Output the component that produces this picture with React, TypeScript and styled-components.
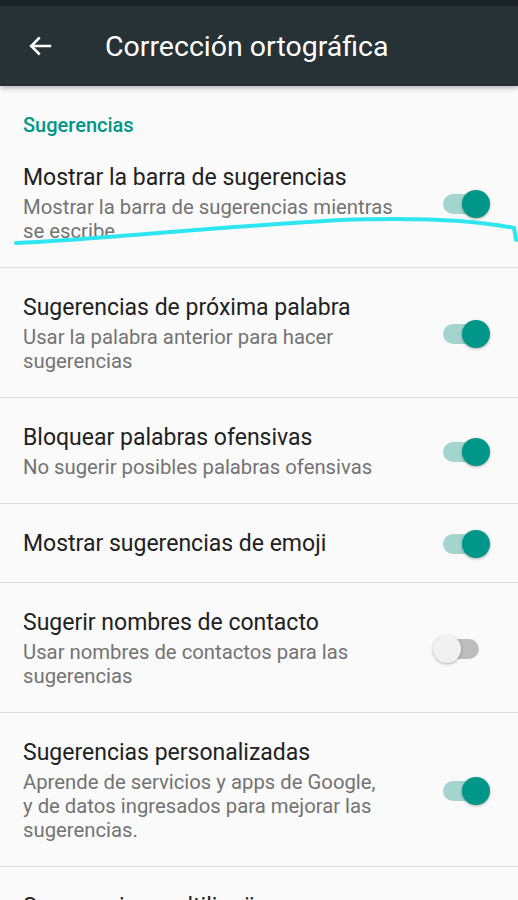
import { useState } from "react";
import styled, { createGlobalStyle } from "styled-components";

const GlobalStyle = createGlobalStyle`
	html, body {
		margin: 0;
		padding: 0;
		background: #fafafa;
		font-family: Roboto, "Noto Sans", sans-serif;
		overflow: hidden;
	}
`;

const Screen = styled.div`
	position: relative;
	width: 518px;
	height: 900px;
	overflow: hidden;
	background: #fafafa;
`;

const StatusBar = styled.div`
	height: 6px;
	background: #1d2427;
`;

const Toolbar = styled.header`
	display: flex;
	align-items: center;
	height: 80px;
	padding: 0 0 0 26px;
	background: #273236;
	color: #fff;
	box-shadow: 0 2px 5px rgba(0, 0, 0, 0.28);
	position: relative;
	z-index: 1;
	& > svg {
		flex: none;
	}
`;

const Title = styled.h1`
	margin: 0 0 0 51px;
	font-size: 28.5px;
	font-weight: 400;
`;

const SectionHeader = styled.div`
	padding: 27px 23px 1px;
	font-size: 20px;
	line-height: 24px;
	color: #009688;
	font-weight: 500;
`;

const Row = styled.div`
	display: flex;
	align-items: center;
	padding: 26px 39px 24px 23px;
	border-bottom: 1px solid #dadada;
	& > .text {
		flex: 1;
		min-width: 0;
		max-width: 372px;
	}
	& > .text + * {
		margin-left: auto;
	}
`;

const RowTitle = styled.div`
	font-size: 23px;
	line-height: 28px;
	color: #212121;
`;

const RowSummary = styled.div`
	margin-top: 3px;
	font-size: 20.3px;
	line-height: 24px;
	color: #737373;
`;

const Track = styled.button<{ $on: boolean }>`
	position: relative;
	flex: none;
	width: 36px;
	height: 20px;
	padding: 0;
	border: none;
	border-radius: 10px;
	background: ${(p) => (p.$on ? "#a3d4ce" : "#bdbdbd")};
	cursor: pointer;
	&::after {
		content: "";
		position: absolute;
		top: -4px;
		left: ${(p) => (p.$on ? "19px" : "-10px")};
		width: 28px;
		height: 28px;
		border-radius: 50%;
		background: ${(p) => (p.$on ? "#009688" : "#f1f1f1")};
		box-shadow: 0 1px 3px rgba(0, 0, 0, 0.3);
	}
`;

const Scribble = styled.svg`
	position: absolute;
	left: 0;
	top: 0;
	pointer-events: none;
`;

const prefs = [
	{ title: "Mostrar la barra de sugerencias", summary: "Mostrar la barra de sugerencias mientras se escribe", on: true },
	{ title: "Sugerencias de próxima palabra", summary: "Usar la palabra anterior para hacer sugerencias", on: true },
	{ title: "Bloquear palabras ofensivas", summary: "No sugerir posibles palabras ofensivas", on: true },
	{ title: "Mostrar sugerencias de emoji", on: true },
	{ title: "Sugerir nombres de contacto", summary: "Usar nombres de contactos para las sugerencias", on: false },
	{ title: "Sugerencias personalizadas", summary: "Aprende de servicios y apps de Google, y\u00a0de datos ingresados para mejorar las sugerencias.", on: true },
	{ title: "Sugerencias multilingües", summary: "Mostrar sugerencias en varios idiomas", on: true },
];

export default function App() {
	const [state, setState] = useState(prefs.map((p) => p.on));

	return (
		<Screen>
			<GlobalStyle />
			<StatusBar />
			<Toolbar>
				<svg width="28" height="28" viewBox="0 0 24 24" fill="none" stroke="#fff" strokeWidth="2.2" strokeLinecap="square">
					<path d="M20.5 12H4.5M11 5.5 4.5 12l6.5 6.5" />
				</svg>
				<Title>Corrección ortográfica</Title>
			</Toolbar>
			<SectionHeader>Sugerencias</SectionHeader>
			{prefs.map((p, i) => (
				<Row key={p.title}>
					<div className="text">
						<RowTitle>{p.title}</RowTitle>
						{p.summary && <RowSummary>{p.summary}</RowSummary>}
					</div>
					<Track
						$on={state[i]}
						aria-label={p.title}
						onClick={() => setState((s) => s.map((v, j) => (j === i ? !v : v)))}
					/>
				</Row>
			))}
			<Scribble width="518" height="900" viewBox="0 0 518 900">
				<path
					d="M16 243 C 90 240, 200 228, 340 220 C 420 217, 480 221, 514 228 L 516 240"
					fill="none"
					stroke="#2ee6ef"
					strokeWidth="4"
					strokeLinecap="round"
				/>
			</Scribble>
		</Screen>
	);
}
